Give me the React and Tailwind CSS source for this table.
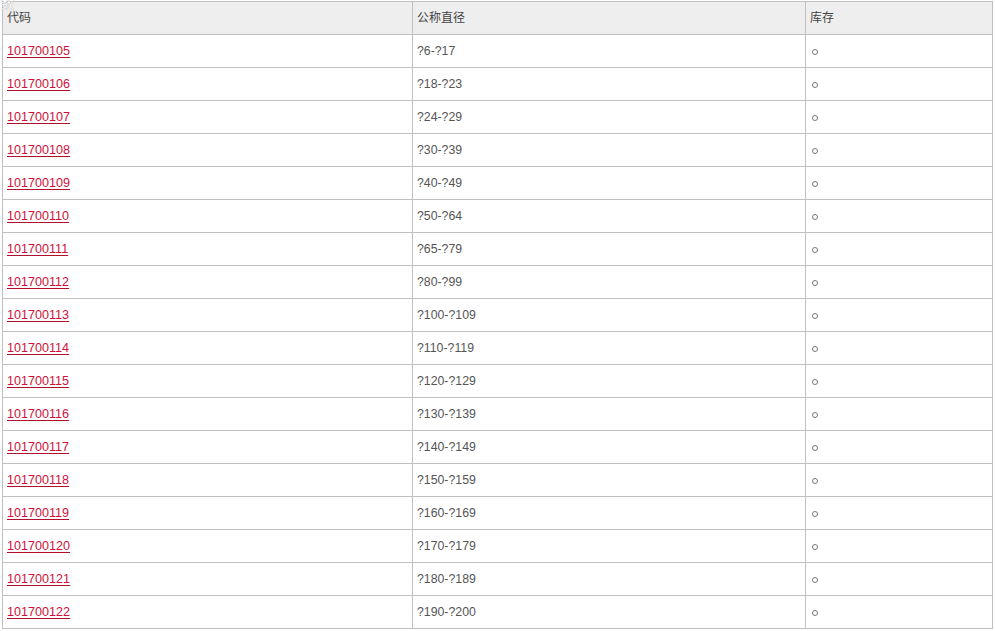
const rows = [
  ["101700105", "?6-?17"],
  ["101700106", "?18-?23"],
  ["101700107", "?24-?29"],
  ["101700108", "?30-?39"],
  ["101700109", "?40-?49"],
  ["101700110", "?50-?64"],
  ["101700111", "?65-?79"],
  ["101700112", "?80-?99"],
  ["101700113", "?100-?109"],
  ["101700114", "?110-?119"],
  ["101700115", "?120-?129"],
  ["101700116", "?130-?139"],
  ["101700117", "?140-?149"],
  ["101700118", "?150-?159"],
  ["101700119", "?160-?169"],
  ["101700120", "?170-?179"],
  ["101700121", "?180-?189"],
  ["101700122", "?190-?200"],
];

const cell = "h-[33px] border border-[#c0c0c0] pl-[4px] text-left align-middle";

const App = () => {
  return (
    <div className="relative min-h-[631px] bg-white pl-[2px] pt-[1px] font-['Liberation_Sans','Noto_Sans_CJK_SC',sans-serif] text-[12px]">
      <span className="absolute left-[1px] top-[-3px] text-[13px] leading-none text-white [text-shadow:0_0_1px_#888]">
        数
      </span>
      <table className="w-[990px] table-fixed border-collapse">
        <colgroup>
          <col className="w-[410px]" />
          <col className="w-[393px]" />
          <col className="w-[187px]" />
        </colgroup>
        <thead>
          <tr className="bg-[#eeeeee] text-[#444]">
            <th className={`${cell} font-normal`}>代码</th>
            <th className={`${cell} font-normal`}>公称直径</th>
            <th className={`${cell} font-normal`}>库存</th>
          </tr>
        </thead>
        <tbody>
          {rows.map(([code, size]) => (
            <tr key={code}>
              <td className={cell}>
                <a href="#" className="text-[12.6px] text-[#d0103a] underline decoration-[#b0102a] underline-offset-[2px]">
                  {code}
                </a>
              </td>
              <td className={`${cell} text-[12.3px] text-[#555]`}>{size}</td>
              <td className={cell}>
                <span className="ml-[2px] inline-block h-[6px] w-[6px] rounded-full border border-[#777]" />
              </td>
            </tr>
          ))}
        </tbody>
      </table>
    </div>
  );
};

export default App;
